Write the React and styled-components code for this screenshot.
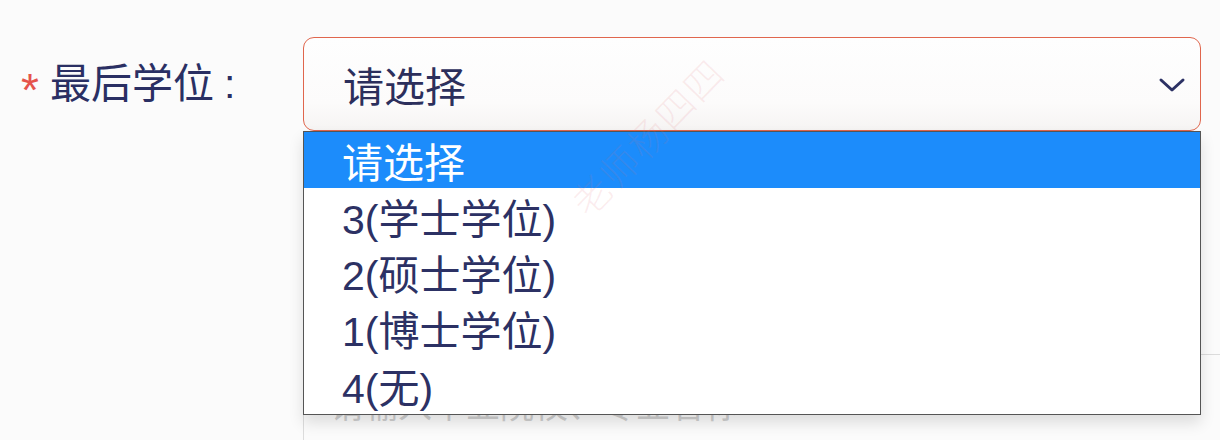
import styled, { createGlobalStyle } from "styled-components";

const GlobalStyle = createGlobalStyle`
    html, body {
        margin: 0;
        padding: 0;
        background: #fbfbfb;
        overflow: hidden;
    }
    body {
        font-family: "Liberation Sans", "Noto Sans CJK SC", sans-serif;
    }
`;

const Page = styled.div`
    position: relative;
    width: 1220px;
    height: 440px;
    padding-top: 37px;
    box-sizing: border-box;
    overflow: hidden;
`;

const FormRow = styled.div`
    display: flex;
    align-items: ${(p) => (p.top ? "flex-start" : "center")};
    margin-top: ${(p) => p.offset || 0}px;
`;

const Label = styled.label`
    flex-shrink: 0;
    width: 303px;
    box-sizing: border-box;
    padding-left: 21px;
    display: flex;
    align-items: center;
    font-size: 41px;
    color: #2a2f63;
    line-height: 1;
`;

const Star = styled.span`
    color: #e5534b;
    font-size: 46px;
    margin-right: 11px;
    margin-top: 12px;
    font-weight: 300;
`;

const Colon = styled.span`
    margin-left: 10px;
`;

const SelectWrap = styled.div`
    position: relative;
    flex-shrink: 0;
    width: 898px;
`;

const SelectBox = styled.div`
    height: 94px;
    box-sizing: border-box;
    border: 1.5px solid #e0664d;
    border-radius: 11px;
    background: linear-gradient(#fefefe, #fcfbfb 70%, #f6f4f3);
    display: flex;
    align-items: center;
    justify-content: space-between;
    padding: 0 14px 0 39px;
    font-size: 41px;
    color: #2c2f5c;
`;

const Chevron = styled.svg`
    width: 28px;
    height: 18px;
    margin-top: 2px;
`;

const Menu = styled.ul`
    position: absolute;
    left: 0;
    top: 94px;
    width: 100%;
    margin: 0;
    padding: 0;
    list-style: none;
    background: #fff;
    border: 1.5px solid #555;
    box-sizing: border-box;
    box-shadow: 0 8px 14px rgba(0, 0, 0, 0.12);
    z-index: 2;
`;

const Option = styled.li`
    height: 56px;
    display: flex;
    align-items: center;
    padding-left: 38px;
    font-size: 41px;
    background: ${(p) => (p.active ? "#1c8cfb" : "transparent")};
    color: ${(p) => (p.active ? "#fff" : "#2c3164")};
    &:last-child {
        height: 58px;
    }
`;

const TextArea = styled.div`
    flex-shrink: 0;
    width: 1000px;
    height: 120px;
    border-top: 1.5px solid #dcdcdc;
    border-left: 1.5px solid #dcdcdc;
    padding: 24px 0 0 26px;
    box-sizing: border-box;
    color: #cfcfcf;
    font-size: 34px;
`;

const Watermark = styled.div`
    position: absolute;
    left: 597px;
    top: 172px;
    height: 55px;
    line-height: 55px;
    white-space: nowrap;
    transform: rotate(-46deg);
    transform-origin: left bottom;
    font-family: "Noto Sans CJK SC", serif;
    font-size: 38px;
    font-weight: 300;
    color: rgba(225, 110, 120, 0.12);
    pointer-events: none;
    z-index: 3;
    letter-spacing: 2px;
`;

const options = ["请选择", "3(学士学位)", "2(硕士学位)", "1(博士学位)", "4(无)"];

const App = () => {
    return (
        <Page>
            <GlobalStyle />
            <FormRow>
                <Label>
                    <Star>*</Star>最后学位<Colon>:</Colon>
                </Label>
                <SelectWrap>
                    <SelectBox>
                        <span>请选择</span>
                        <Chevron viewBox="0 0 28 18" fill="none">
                            <path d="M3 4 L14 14 L25 4" stroke="#2c3164" strokeWidth="3" strokeLinecap="round" strokeLinejoin="round" />
                        </Chevron>
                    </SelectBox>
                    <Menu>
                        {options.map((o, i) => (
                            <Option key={o} active={i === 0}>{o}</Option>
                        ))}
                    </Menu>
                </SelectWrap>
            </FormRow>
            <FormRow top offset={223}>
                <Label />
                <TextArea>请输入毕业院校、专业名称</TextArea>
            </FormRow>
            <Watermark>老师杨四四</Watermark>
        </Page>
    );
};

export default App;
